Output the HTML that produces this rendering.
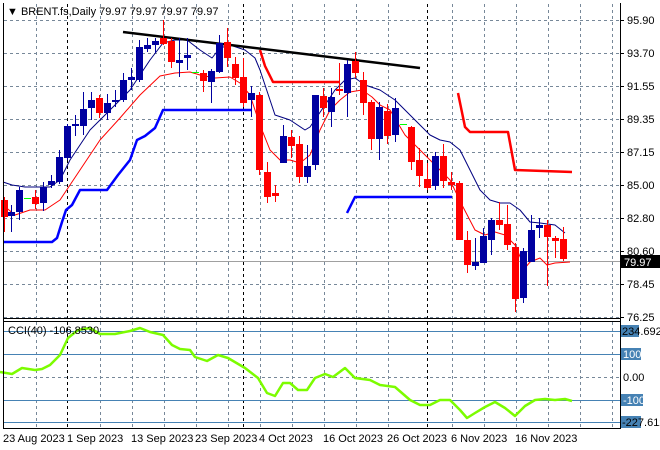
<!DOCTYPE html>
<html><head><meta charset="utf-8"><style>
body{margin:0;background:#fff;width:660px;height:450px;overflow:hidden}
svg{display:block}
text{font-family:"Liberation Sans",sans-serif;font-size:11px;fill:#000}
</style></head><body>
<svg id="s" width="660" height="450" viewBox="0 0 660 450" xmlns="http://www.w3.org/2000/svg" shape-rendering="crispEdges">
<rect width="660" height="450" fill="#fff"/>
<g id="grid" stroke="#778899" stroke-dasharray="3,3" stroke-width="1"></g>
<g id="lvl"></g>
<g id="ind" fill="none" shape-rendering="auto"></g>
<g id="cndl"></g>
<g fill="none" stroke="#000">
<line x1="3.5" y1="3" x2="3.5" y2="428"/>
<line x1="620.5" y1="3" x2="620.5" y2="428" stroke-width="1"/>
<line x1="3" y1="318.5" x2="621" y2="318.5"/>
<line x1="3" y1="321.5" x2="621" y2="321.5"/>
<line x1="3" y1="428.5" x2="621" y2="428.5"/>
</g>
<text x="7" y="15">▼ BRENT.fs,Daily  79.97 79.97 79.97 79.97</text>
<text x="8" y="334">CCI(40) -106.8530</text>
<g id="axis"></g>
<g>
<text x="3" y="442">23 Aug 2023</text>
<text x="67" y="442">1 Sep 2023</text>
<text x="131" y="442">13 Sep 2023</text>
<text x="195" y="442">23 Sep 2023</text>
<text x="259" y="442">4 Oct 2023</text>
<text x="323" y="442">16 Oct 2023</text>
<text x="387" y="442">26 Oct 2023</text>
<text x="451" y="442">6 Nov 2023</text>
<text x="515" y="442">16 Nov 2023</text>
</g>
</svg>
<script>
var NS="http://www.w3.org/2000/svg";
function el(p,t,a,txt){var e=document.createElementNS(NS,t);for(var k in a)e.setAttribute(k,a[k]);if(txt)e.textContent=txt;document.getElementById(p).appendChild(e);return e;}
// grid
var hy=[20,53,86,119,152,185,218,251,284,317];
hy.forEach(function(y){el("grid","line",{x1:4,y1:y+.5,x2:620,y2:y+.5});});
el("grid","line",{x1:4,y1:377.5,x2:620,y2:377.5});
for(var x=36;x<620;x+=32){if(x==68||x==244||x==420)continue;el("grid","line",{x1:x+.5,y1:4,x2:x+.5,y2:428});}
[67,243,427].forEach(function(x){el("grid","line",{x1:x+.5,y1:4,x2:x+.5,y2:428,stroke:"#000"});});
// price line
el("lvl","line",{x1:4,y1:261.5,x2:620,y2:261.5,stroke:"#a0a0a0"});
[331,354,400,422].forEach(function(y){el("lvl","line",{x1:4,y1:y+.5,x2:620,y2:y+.5,stroke:"#4682b4"});});
// axis labels
var lab=[["95.90",20],["93.70",53],["91.55",86],["89.35",119],["87.15",152],["85.00",185],["82.80",218],["80.60",251],["78.45",284],["76.25",317]];
lab.forEach(function(l){el("axis","line",{x1:620,y1:l[1]+.5,x2:624,y2:l[1]+.5,stroke:"#000"});el("axis","text",{x:627,y:l[1]+4},l[0]);});
el("axis","rect",{x:621,y:255,width:39,height:13,fill:"#000"});
el("axis","text",{x:624,y:266,style:"fill:#fff"},"79.97");
el("axis","rect",{x:621,y:325,width:18,height:12,fill:"#4682b4"});
el("axis","text",{x:622,y:335},"234.6928");
el("axis","rect",{x:621,y:348,width:20,height:12,fill:"#4682b4"});
el("axis","text",{x:623,y:358,style:"fill:#fff"},"100");
el("axis","text",{x:623,y:381},"0.00");
el("axis","rect",{x:621,y:394,width:22,height:12,fill:"#4682b4"});
el("axis","text",{x:623,y:404,style:"fill:#fff"},"-100");
el("axis","rect",{x:621,y:416,width:20,height:12,fill:"#4682b4"});
el("axis","text",{x:622,y:426},"-227.612");
// lines
function pl(pts,c,w){el("ind","polyline",{points:pts,stroke:c,"stroke-width":w,"stroke-linejoin":"round"});}
pl("3,182 12,185 25,187 50,187 60,180 70,160 90,130 110,110 130,90 150,60 163,43 175,40 187,40 200,50 212,58 220,48 230,45 245,50 255,58 260,70 275,115 290,120 305,130 310,127 325,105 335,90 345,80 355,78 365,85 380,90 395,100 410,115 420,125 430,135 440,140 450,142 460,150 470,170 480,190 490,200 500,203 510,203 520,210 530,222 540,223 555,225 565,233","#000080",1);
pl("3,205 15,215 30,210 45,210 60,200 70,185 80,170 100,140 120,118 140,95 160,76 175,73 190,72 200,75 215,78 230,77 240,83 250,95 260,125 270,150 280,160 290,160 300,163 310,155 320,130 330,110 340,100 350,92 362,90 372,97 380,105 390,110 405,135 420,150 435,165 450,180 462,205 475,230 485,235 495,232 505,235 515,245 525,268 530,262 540,258 547,265 555,263 570,262","#ff0000",1);
pl("3,242 52,242 57,238 62,222 66,210 72,205 80,190 107,190 118,175 130,160 137,140 145,136 155,128 163,110 251,110","#0000ff",2.5);
pl("347,213 355,197 452,197","#0000ff",2.5);
pl("260,50 265,66 273,82 339,82","#ff0000",2.5);
pl("458,93 465,127 470,132 508,132 515,170 572,172","#ff0000",2.5);
pl("123,32 420,68","#000",2.5);
pl("0,372 12,374 22,368 35,370 42,369 50,365 60,355 68,338 78,330 90,328 100,334 115,334 130,331 140,328 150,332 163,335 172,345 180,349 190,350 195,357 207,361 218,355 228,358 245,368 258,378 267,393 275,396 283,383 290,383 298,390 307,390 315,378 325,374 333,377 345,368 355,378 370,380 380,385 395,387 410,400 420,405 430,405 440,400 450,400 460,410 467,418 475,413 485,407 495,402 505,408 515,416 525,406 535,400 545,399 555,400 565,399 572,401","#7cfc00",2.5);
// candles [x, color(b/r/g), top, bottom, hi, lo]
var C=[[4,'r',200,217,197,232],[11,'b',212,216,205,232],[19,'b',190,212,187,220],[27,'g',198,198,198,198],[35,'r',197,204,190,209],[43,'b',187,203,182,211],[51,'b',181,185,175,188],[59,'b',157,182,150,184],[67,'b',126,158,124,160],[75,'b',124,126,115,136],[83,'b',109,126,92,135],[91,'b',100,108,92,120],[99,'r',98,113,95,118],[107,'b',103,113,94,120],[115,'b',100,101,90,107],[123,'b',80,100,73,102],[131,'b',77,80,68,90],[139,'b',47,80,40,82],[147,'b',45,49,38,52],[155,'b',41,45,38,53],[163,'r',38,44,20,45],[171,'r',41,62,38,68],[179,'b',60,63,38,77],[187,'b',55,58,38,70],[195,'g',72,72,72,72],[203,'r',73,81,70,92],[211,'b',71,82,69,103],[219,'b',43,72,35,73],[227,'r',42,58,28,67],[235,'r',64,78,57,85],[243,'r',77,103,58,107],[251,'b',93,100,86,117],[259,'r',95,170,92,175],[267,'r',172,197,162,203],[275,'r',193,196,185,202],[283,'b',136,163,125,163],[291,'r',137,146,130,158],[299,'r',144,177,136,183],[307,'b',166,177,145,183],[315,'b',95,165,95,170],[323,'r',96,108,88,117],[331,'b',97,112,88,127],[339,'r',89,91,63,95],[347,'b',64,93,60,117],[355,'r',61,73,52,78],[363,'r',80,103,72,115],[371,'r',102,139,100,150],[379,'b',107,139,102,160],[387,'r',111,136,104,144],[395,'b',108,135,98,142],[403,'g',124,124,124,124],[411,'r',127,162,126,170],[419,'r',160,176,148,187],[427,'r',179,188,163,190],[435,'b',156,186,152,190],[443,'r',156,181,144,188],[451,'r',182,185,172,190],[459,'r',183,240,181,240],[467,'r',240,265,231,273],[475,'b',262,266,238,270],[483,'b',236,263,228,263],[491,'b',220,240,218,255],[499,'r',220,225,202,230],[507,'r',224,245,205,250],[515,'r',247,299,243,312],[523,'b',251,298,248,303],[531,'b',230,262,215,262],[539,'b',225,228,218,238],[547,'r',225,237,220,286],[555,'r',238,241,236,258],[563,'r',239,259,227,261]];
C.forEach(function(c){var col=c[1]=='r'?'#ff0000':c[1]=='b'?'#0000a0':'#00ff00';
 if(c[1]=='g'){el("cndl","rect",{x:c[0]-3,y:c[2],width:7,height:1,fill:col});return;}
 el("cndl","rect",{x:c[0],y:c[4],width:1,height:c[5]-c[4],fill:col});
 el("cndl","rect",{x:c[0]-3,y:c[2],width:7,height:Math.max(2,c[3]-c[2]),fill:col});});
</script>
</body></html>
